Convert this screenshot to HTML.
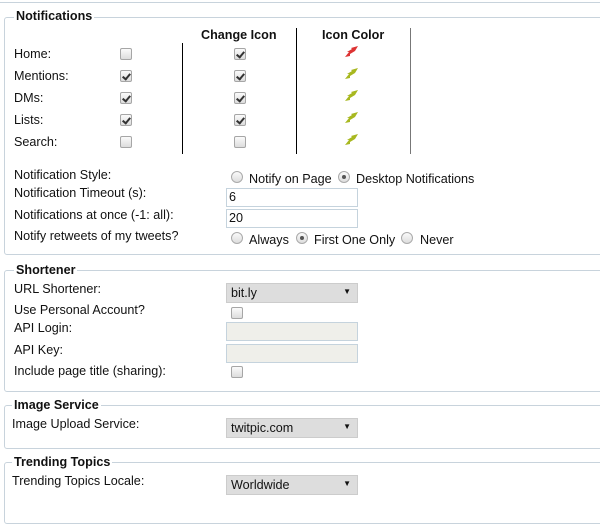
<!DOCTYPE html>
<html><head><style>
body{margin:0;width:600px;height:501px;overflow:hidden;background:#fff;font-family:"Liberation Sans",Arial,sans-serif;font-size:12.6px;color:#111;position:relative}
.a{position:absolute;white-space:nowrap}
.fs{position:absolute;left:4px;width:620px;border:1px solid #c8d3dc;border-radius:3px}
.lg{position:absolute;background:#fff;font-weight:bold;padding:0 2px}
.cb{position:absolute;width:10px;height:10px;border:1px solid #a6a6a6;border-radius:2px;background:linear-gradient(#fafafa,#dcdcdc)}
.cb.c::after{content:"";position:absolute;left:3px;top:1px;width:3px;height:6px;border:solid #333;border-width:0 2px 2px 0;transform:rotate(40deg)}
.rd{position:absolute;width:10px;height:10px;border:1px solid #aaa;border-radius:50%;background:linear-gradient(#fafafa,#ddd)}
.rd.c::after{content:"";position:absolute;left:3px;top:3px;width:4px;height:4px;border-radius:50%;background:#555}
.tx{position:absolute;left:226px;width:130px;height:17px;border:1px solid #c5d3dd;background:#fff}
.tx span{position:absolute;left:2px;top:1px}
.sel{position:absolute;left:226px;width:130px;height:18px;background:#ddd;border:1px solid #ccc}
.sel span{position:absolute;left:4px;top:2px}
.sel i{position:absolute;right:6px;top:3px;font-style:normal;font-size:8px}
.vl{position:absolute;width:1px;background:#000}
</style></head><body>
<div class="a" style="left:0;top:2px;width:600px;border-top:1px solid #c8d3dc"></div>

<div class="fs" style="top:17px;height:236px"></div>
<div class="lg" style="left:14px;top:9px">Notifications</div>
<div class="a" style="left:201px;top:28px;font-weight:bold">Change Icon</div>
<div class="a" style="left:322px;top:28px;font-weight:bold">Icon Color</div>
<div class="vl" style="left:182px;top:43px;height:111px"></div>
<div class="vl" style="left:296px;top:28px;height:126px"></div>
<div class="vl" style="left:410px;top:28px;height:126px;background:#777"></div>

<div class="a" style="left:14px;top:47px">Home:</div>
<div class="a" style="left:14px;top:69px">Mentions:</div>
<div class="a" style="left:14px;top:91px">DMs:</div>
<div class="a" style="left:14px;top:113px">Lists:</div>
<div class="a" style="left:14px;top:135px">Search:</div>

<div class="cb" style="left:120px;top:48px"></div>
<div class="cb c" style="left:120px;top:70px"></div>
<div class="cb c" style="left:120px;top:92px"></div>
<div class="cb c" style="left:120px;top:114px"></div>
<div class="cb" style="left:120px;top:136px"></div>
<div class="cb c" style="left:234px;top:48px"></div>
<div class="cb c" style="left:234px;top:70px"></div>
<div class="cb c" style="left:234px;top:92px"></div>
<div class="cb c" style="left:234px;top:114px"></div>
<div class="cb" style="left:234px;top:136px"></div>

<svg class="a" style="left:344px;top:46px" width="16" height="12"><path d="M1 11 L5 6 L3 6 L8 3 L7 2 L14 0 L11 5 L6 8 L6 10 Z" fill="#d33"/></svg>
<svg class="a" style="left:344px;top:68px" width="16" height="12"><path d="M1 11 L5 6 L3 6 L8 3 L7 2 L14 0 L11 5 L6 8 L6 10 Z" fill="#a8b820"/></svg>
<svg class="a" style="left:344px;top:90px" width="16" height="12"><path d="M1 11 L5 6 L3 6 L8 3 L7 2 L14 0 L11 5 L6 8 L6 10 Z" fill="#a8b820"/></svg>
<svg class="a" style="left:344px;top:112px" width="16" height="12"><path d="M1 11 L5 6 L3 6 L8 3 L7 2 L14 0 L11 5 L6 8 L6 10 Z" fill="#a8b820"/></svg>
<svg class="a" style="left:344px;top:134px" width="16" height="12"><path d="M1 11 L5 6 L3 6 L8 3 L7 2 L14 0 L11 5 L6 8 L6 10 Z" fill="#a8b820"/></svg>

<div class="a" style="left:14px;top:168px">Notification Style:</div>
<div class="rd" style="left:231px;top:171px"></div>
<div class="a" style="left:249px;top:172px">Notify on Page</div>
<div class="rd c" style="left:338px;top:171px"></div>
<div class="a" style="left:356px;top:172px">Desktop Notifications</div>
<div class="a" style="left:14px;top:186px">Notification Timeout (s):</div>
<div class="tx" style="top:188px"><span>6</span></div>
<div class="a" style="left:14px;top:208px">Notifications at once (-1: all):</div>
<div class="tx" style="top:209px"><span>20</span></div>
<div class="a" style="left:14px;top:229px">Notify retweets of my tweets?</div>
<div class="rd" style="left:231px;top:232px"></div>
<div class="a" style="left:249px;top:233px">Always</div>
<div class="rd c" style="left:296px;top:232px"></div>
<div class="a" style="left:314px;top:233px">First One Only</div>
<div class="rd" style="left:401px;top:232px"></div>
<div class="a" style="left:420px;top:233px">Never</div>

<div class="fs" style="top:270px;height:120px"></div>
<div class="lg" style="left:14px;top:263px">Shortener</div>
<div class="a" style="left:14px;top:282px">URL Shortener:</div>
<div class="sel" style="top:283px"><span>bit.ly</span><i>▼</i></div>
<div class="a" style="left:14px;top:303px">Use Personal Account?</div>
<div class="cb" style="left:231px;top:307px"></div>
<div class="a" style="left:14px;top:321px">API Login:</div>
<div class="tx" style="top:322px;background:#efefea"></div>
<div class="a" style="left:14px;top:343px">API Key:</div>
<div class="tx" style="top:344px;background:#efefea"></div>
<div class="a" style="left:14px;top:364px">Include page title (sharing):</div>
<div class="cb" style="left:231px;top:366px"></div>

<div class="fs" style="top:405px;height:42px"></div>
<div class="lg" style="left:12px;top:398px">Image Service</div>
<div class="a" style="left:12px;top:417px">Image Upload Service:</div>
<div class="sel" style="top:418px"><span>twitpic.com</span><i>▼</i></div>

<div class="fs" style="top:462px;height:60px"></div>
<div class="lg" style="left:12px;top:455px">Trending Topics</div>
<div class="a" style="left:12px;top:474px">Trending Topics Locale:</div>
<div class="sel" style="top:475px"><span>Worldwide</span><i>▼</i></div>
</body></html>
